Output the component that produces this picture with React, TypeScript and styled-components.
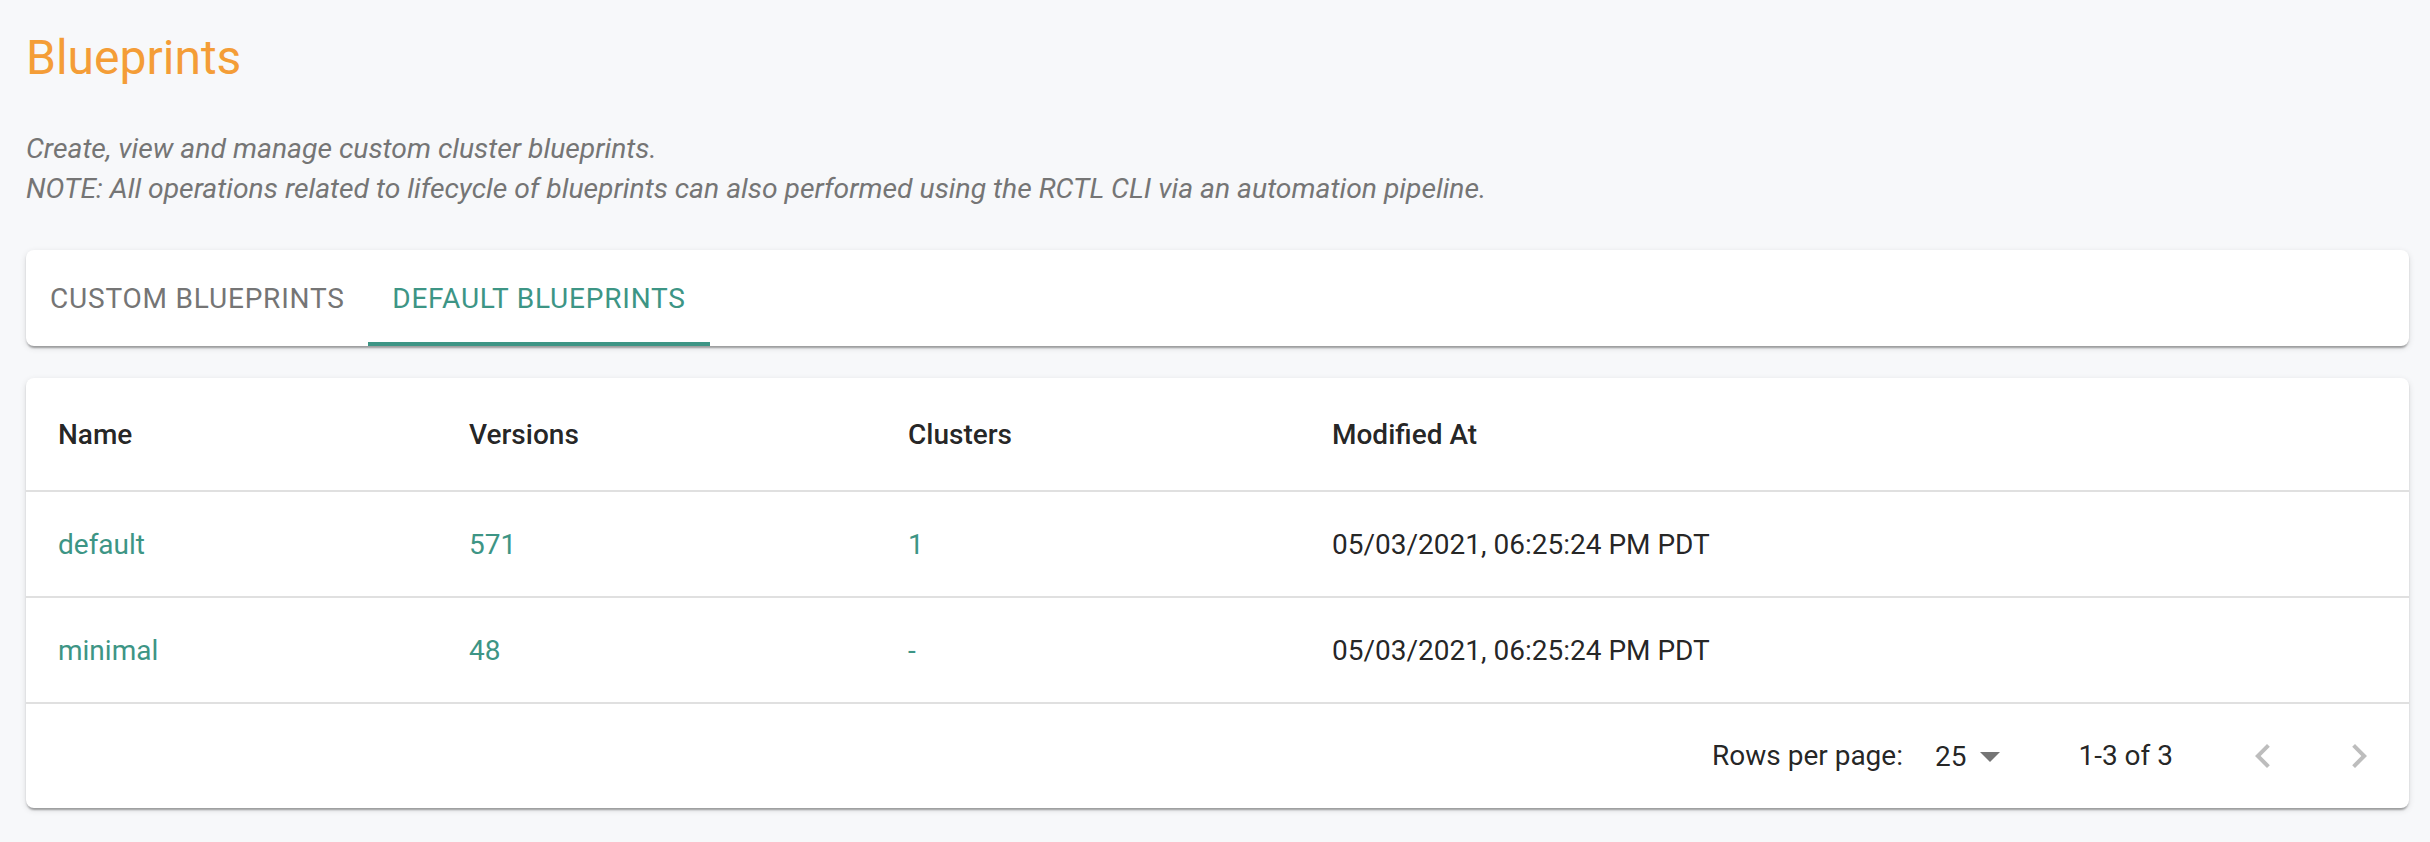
import React from 'react';
import styled, { createGlobalStyle } from 'styled-components';

const TEAL = '#3d9585';

type Blueprint = {
  name: string;
  versions: string;
  clusters: string;
  modifiedAt: string;
};

const blueprints: Blueprint[] = [
  { name: 'default', versions: '571', clusters: '1', modifiedAt: '05/03/2021, 06:25:24 PM PDT' },
  { name: 'minimal', versions: '48', clusters: '-', modifiedAt: '05/03/2021, 06:25:24 PM PDT' },
];

const columns = [
  { label: 'Name', width: 411 },
  { label: 'Versions', width: 439 },
  { label: 'Clusters', width: 424 },
  { label: 'Modified At' },
];

export default function App() {
  return (
    <>
      <GlobalStyle />
      <Page>
        <Title>Blueprints</Title>
        <Description>
          Create, view and manage custom cluster blueprints.
          <br />
          NOTE: All operations related to lifecycle of blueprints can also performed using the RCTL CLI via an
          automation pipeline.
        </Description>

        <TabsCard>
          <Tab>Custom Blueprints</Tab>
          <Tab $active>Default Blueprints</Tab>
        </TabsCard>

        <TableCard>
          <Table>
            <thead>
              <tr>
                {columns.map((col) => (
                  <HeadCell key={col.label} $width={col.width}>
                    {col.label}
                  </HeadCell>
                ))}
              </tr>
            </thead>
            <tbody>
              {blueprints.map((bp) => (
                <tr key={bp.name}>
                  <Cell $link>{bp.name}</Cell>
                  <Cell $link>{bp.versions}</Cell>
                  <Cell $link>{bp.clusters}</Cell>
                  <Cell>{bp.modifiedAt}</Cell>
                </tr>
              ))}
            </tbody>
          </Table>

          <Pagination>
            <Caption>Rows per page:</Caption>
            <RowsSelect>
              <span>25</span>
              <Icon viewBox="0 0 24 24" $color="#757575">
                <path d="M7 10l5 5 5-5z" />
              </Icon>
            </RowsSelect>
            <Caption>1-3 of 3</Caption>
            <PageActions>
              <PageButton disabled aria-label="Previous page">
                <Icon viewBox="0 0 24 24" $color="#bdbdbd">
                  <path d="M15.41 7.41L14 6l-6 6 6 6 1.41-1.41L10.83 12z" />
                </Icon>
              </PageButton>
              <PageButton disabled aria-label="Next page">
                <Icon viewBox="0 0 24 24" $color="#bdbdbd">
                  <path d="M10 6L8.59 7.41 13.17 12l-4.58 4.59L10 18l6-6z" />
                </Icon>
              </PageButton>
            </PageActions>
          </Pagination>
        </TableCard>
      </Page>
    </>
  );
}

const GlobalStyle = createGlobalStyle`
  html, body {
    margin: 0;
    padding: 0;
    background: #f7f8fa;
  }
  body {
    font-family: Roboto, "Noto Sans", "Liberation Sans", sans-serif;
    -webkit-font-smoothing: antialiased;
  }
`;

const Page = styled.main`
  padding: 29px 21px 33px 26px;
`;

const Title = styled.h1`
  margin: 0;
  font-size: 48px;
  line-height: 58px;
  font-weight: 400;
  color: #f49d37;
`;

const Description = styled.p`
  margin: 42px 0 0;
  font-size: 28.3px;
  line-height: 40px;
  font-style: italic;
  color: #757575;
`;

const Paper = styled.div`
  background: #fff;
  border-radius: 8px;
  box-shadow: 0 4px 2px -2px rgba(0, 0, 0, 0.2), 0 2px 2px 0 rgba(0, 0, 0, 0.14),
    0 2px 6px 0 rgba(0, 0, 0, 0.12);
`;

const TabsCard = styled(Paper)`
  display: flex;
  height: 96px;
  margin-top: 41px;
`;

const Tab = styled.button<{ $active?: boolean }>`
  box-sizing: border-box;
  width: 342px;
  height: 96px;
  padding: 0 24px;
  border: 0;
  background: none;
  font-family: inherit;
  font-size: 28px;
  font-weight: 400;
  letter-spacing: 0.02857em;
  text-transform: uppercase;
  white-space: nowrap;
  color: ${(p) => (p.$active ? TEAL : '#757575')};
  box-shadow: ${(p) => (p.$active ? `inset 0 -4px 0 ${TEAL}` : 'none')};
  cursor: pointer;
`;

const TableCard = styled(Paper)`
  margin-top: 32px;
  overflow: hidden;
`;

const Table = styled.table`
  width: 100%;
  border-collapse: collapse;
  table-layout: fixed;
`;

const HeadCell = styled.th<{ $width?: number }>`
  box-sizing: border-box;
  width: ${(p) => (p.$width ? `${p.$width}px` : 'auto')};
  height: 113px;
  padding: 0 32px;
  text-align: left;
  font-size: 28px;
  font-weight: 500;
  color: rgba(0, 0, 0, 0.87);
  border-bottom: 2px solid #e0e0e0;
`;

const Cell = styled.td<{ $link?: boolean }>`
  box-sizing: border-box;
  height: 106px;
  padding: 0 32px;
  font-size: 28px;
  font-weight: 400;
  color: ${(p) => (p.$link ? TEAL : 'rgba(0, 0, 0, 0.87)')};
  border-bottom: 2px solid #e0e0e0;
`;

const Pagination = styled.div`
  display: flex;
  align-items: center;
  justify-content: flex-end;
  height: 104px;
  padding-right: 2px;
  font-size: 28px;
  color: rgba(0, 0, 0, 0.87);
`;

const Caption = styled.span`
  font-size: 28px;
  line-height: 1.43;
`;

const RowsSelect = styled.div`
  display: flex;
  align-items: center;
  margin: 0 64px 0 32px;
  font-size: 28px;
`;

const PageActions = styled.div`
  display: flex;
  margin-left: 42px;
`;

const PageButton = styled.button`
  display: flex;
  align-items: center;
  justify-content: center;
  width: 96px;
  height: 96px;
  padding: 0;
  border: 0;
  border-radius: 50%;
  background: none;
`;

const Icon = styled.svg<{ $color: string }>`
  width: 48px;
  height: 48px;
  fill: ${(p) => p.$color};
  flex-shrink: 0;
`;
